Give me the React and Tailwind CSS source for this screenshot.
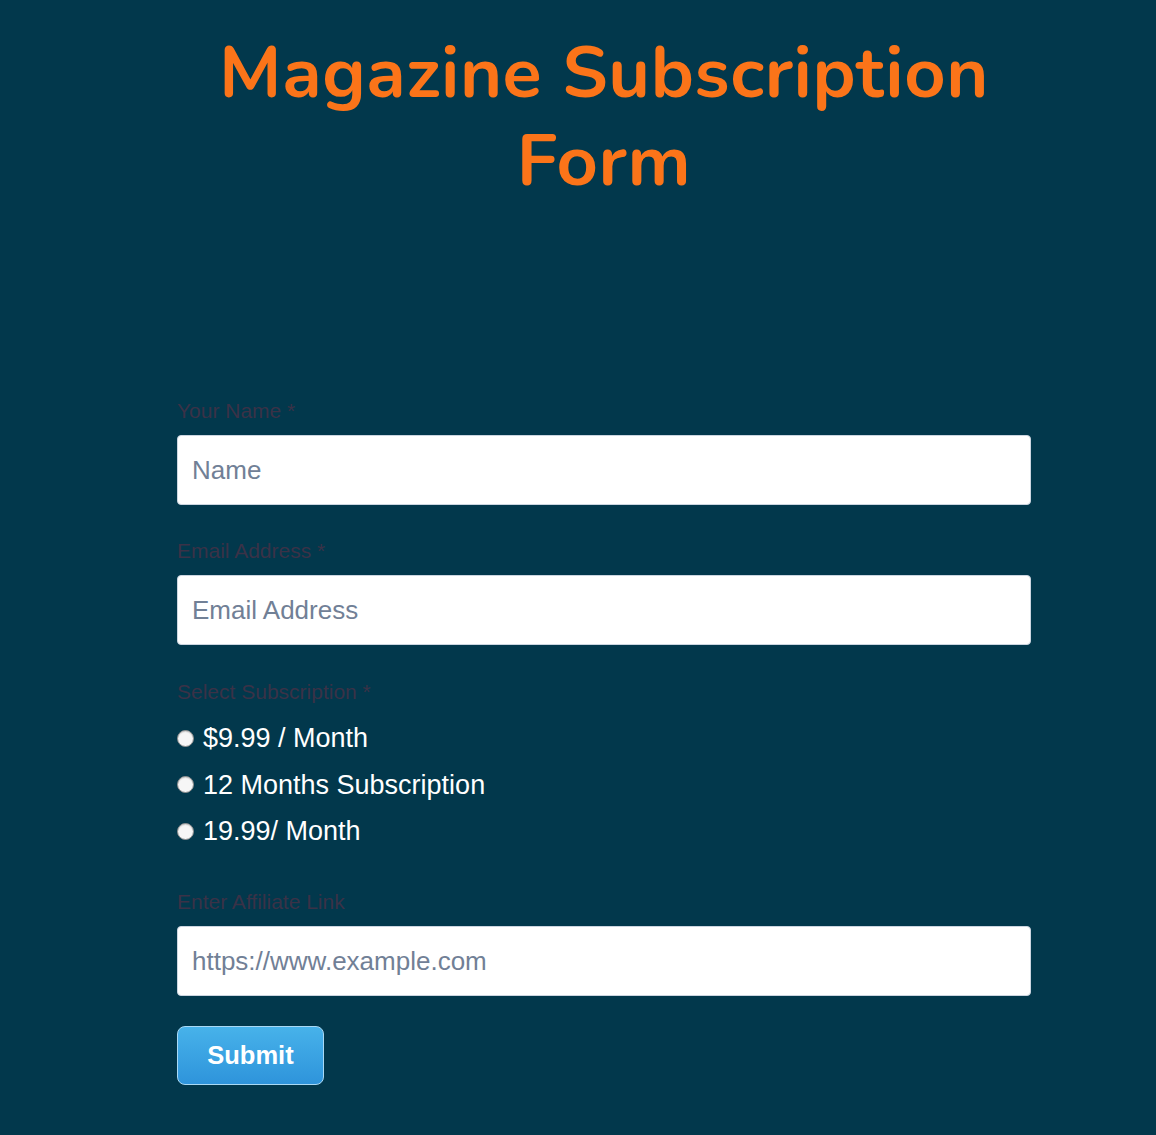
export default function App() {
  const sans = { fontFamily: '"Liberation Sans", Arial, sans-serif' };
  const inputCls =
    "h-[70px] w-full rounded-[4px] border border-[#cbd5e0] bg-white px-[14px] text-[26px] text-[#4a5568] placeholder:text-[#718096] outline-none";
  return (
    <div className="min-h-[1135px] w-full bg-[#02384c]" style={sans}>
      <div className="ml-[177px] w-[854px] pt-[29px]">
        <h1
          className="text-center text-[72px] leading-[88px] font-bold text-[#fb7419] tracking-[0.6px]"
          style={{ fontFamily: 'Nunito, "Open Sans", Lato, sans-serif' }}
        >
          Magazine Subscription Form
        </h1>
        <div className="mt-[194px] flex flex-col">
          <label className="text-[21px] leading-[24px] text-[#3a3247]">Your Name *</label>
          <input className={"mt-[12px] " + inputCls} placeholder="Name" style={sans} />
          <label className="mt-[34px] text-[21px] leading-[24px] text-[#3a3247]">Email Address *</label>
          <input className={"mt-[12px] " + inputCls} placeholder="Email Address" style={sans} />
          <label className="mt-[35px] text-[21px] leading-[24px] text-[#3a3247]">Select Subscription *</label>
          <div className="mt-[19px] flex flex-col gap-[16.5px]">
            {["$9.99 / Month", "12 Months Subscription", "19.99/ Month"].map((t) => (
              <label key={t} className="flex h-[30px] items-center gap-[9px] text-[27px] leading-[30px] text-white">
                <input
                  type="radio"
                  name="sub"
                  className="m-0 h-[17px] w-[17px] shrink-0 appearance-none rounded-full border border-[#8d8d8d] bg-[#f6f6f6] shadow-[inset_0_1px_1px_rgba(0,0,0,0.15)]"
                />
                <span>{t}</span>
              </label>
            ))}
          </div>
          <label className="mt-[44px] text-[21px] leading-[24px] text-[#3a3247]">Enter Affiliate Link</label>
          <input className={"mt-[12px] " + inputCls} placeholder="https://www.example.com" style={sans} />
          <div className="mt-[30px]">
            <button
              className="h-[59px] w-[147px] rounded-[8px] border border-[#a9d9f5] bg-gradient-to-b from-[#47b2ea] to-[#2e94db] text-[25.5px] font-bold text-white"
              style={sans}
            >
              Submit
            </button>
          </div>
        </div>
      </div>
    </div>
  );
}
